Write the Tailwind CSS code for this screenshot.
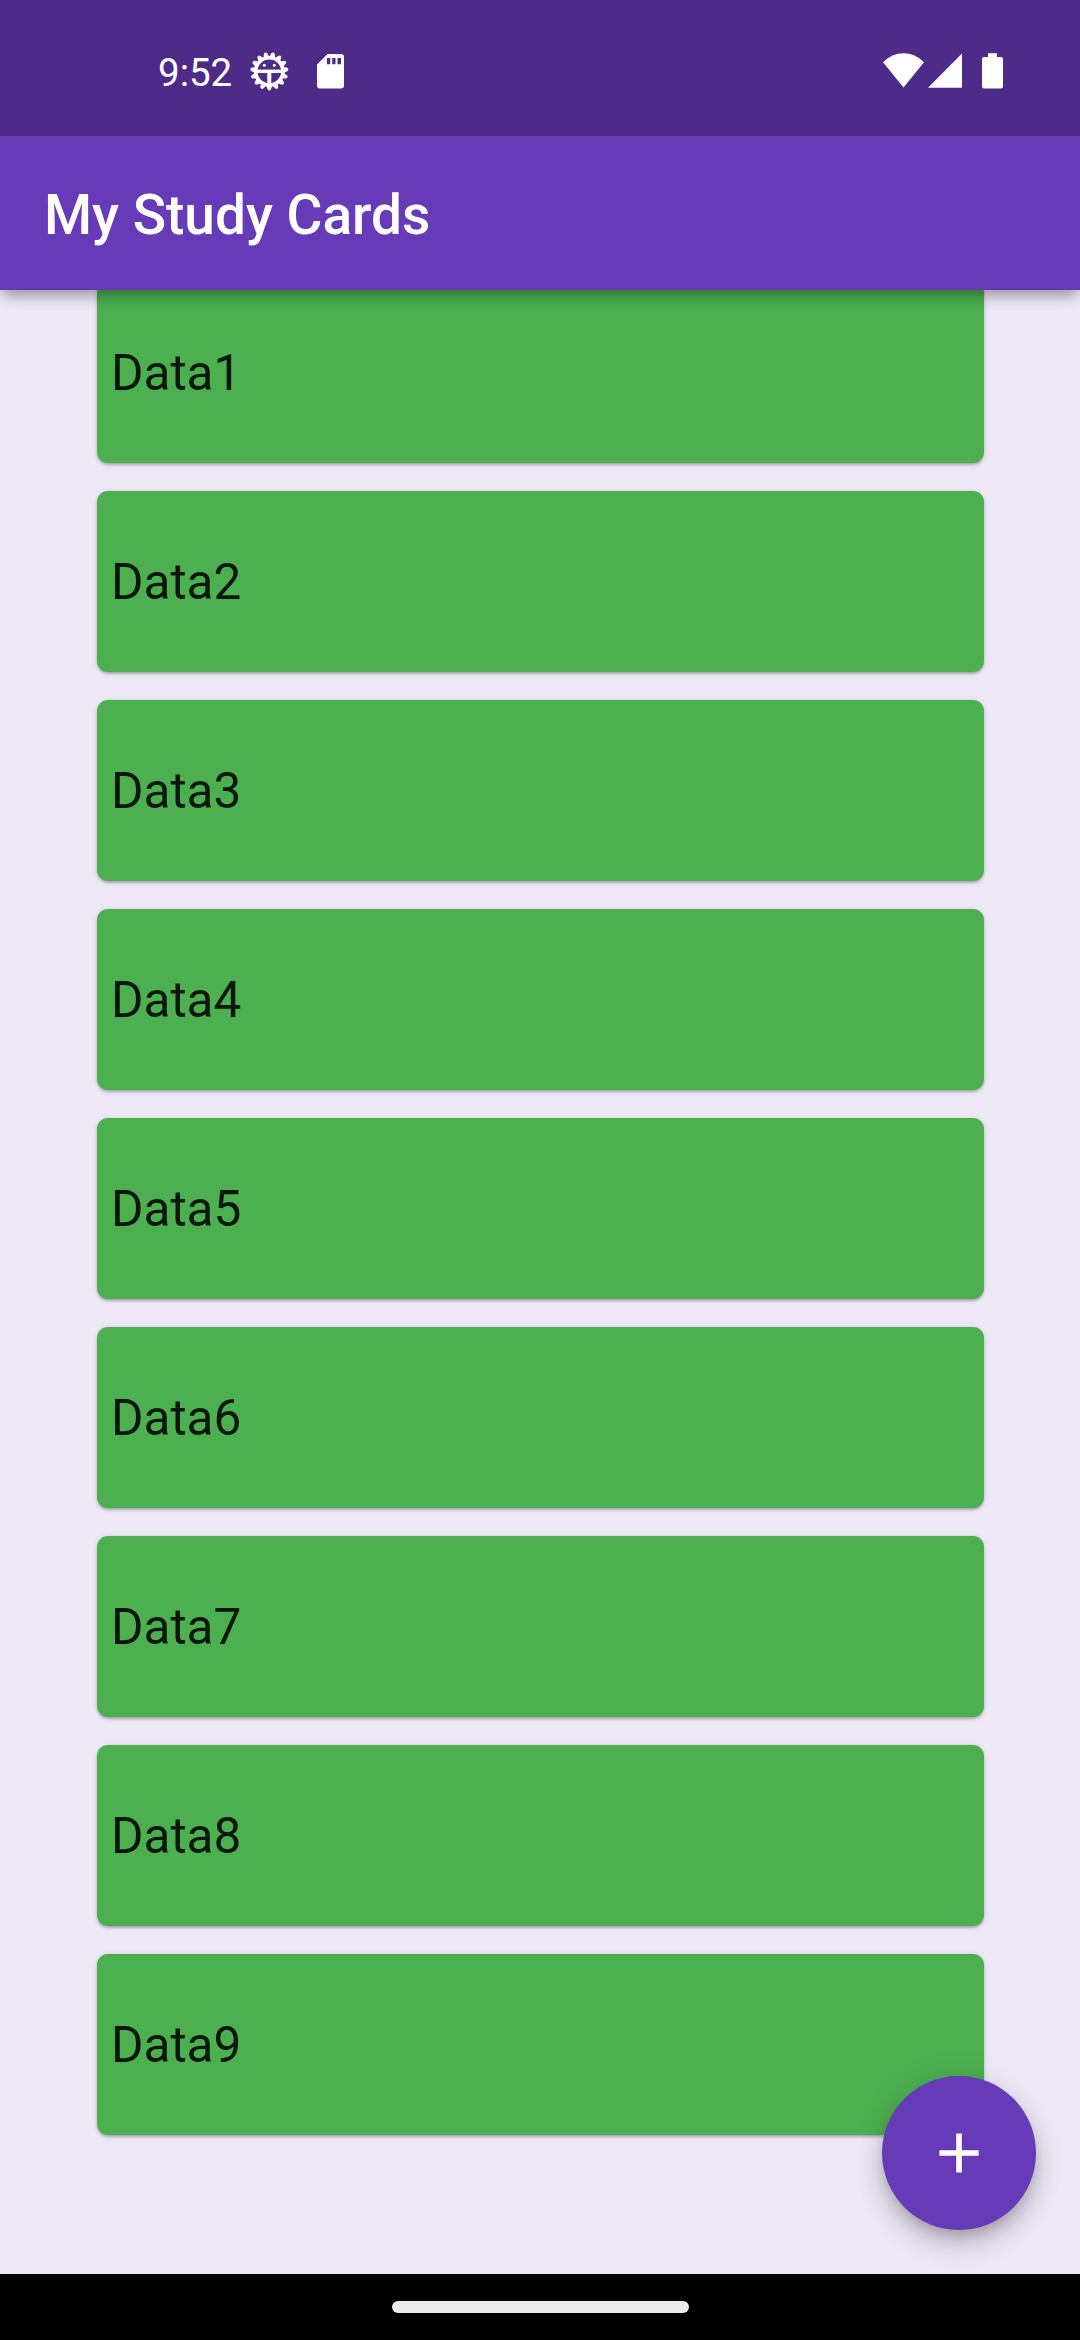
<!DOCTYPE html>
<html lang="en">
<head>
<meta charset="utf-8">
<title>My Study Cards</title>
<script src="https://cdn.jsdelivr.net/npm/@tailwindcss/browser@4"></script>
</head>
<body class="relative flex h-[2340px] w-[1080px] flex-col overflow-hidden bg-[#ede7f6] font-['Roboto',sans-serif]">
  <div class="relative flex h-[136px] z-20 shrink-0 items-start bg-[#4e2b88] pt-[48px] text-white">
    <span class="ml-[158px] mt-px w-[90px] text-[38.5px] leading-[48px] whitespace-nowrap">9:52</span>
    <svg class="ml-[1px] mt-[3px] size-[40px]" viewBox="-20.300 -20.300 40 40" fill="none">
      <circle r="13.600" stroke="#fff" stroke-width="3.600"/>
      <g id="teeth" fill="#fff"></g>
      <path d="M-13 0H13" stroke="#fff" stroke-width="3.400"/>
      <path d="M0 0V13" stroke="#fff" stroke-width="4"/>
      <circle cx="-5" cy="-6" r="1.500" fill="#fff"/>
      <circle cx="5" cy="-6" r="1.500" fill="#fff"/>
    </svg>
    <svg class="mt-[6px] ml-[28px] h-[35px] w-[27px]" viewBox="0 0 27 35">
      <path fill="#fff" fill-rule="evenodd" d="M10.500 0H24Q27 0 27 3V31.500Q27 34.500 24 34.500H3Q0 34.500 0 31.500V10.500ZM10 4V10.300H13.300V4ZM15.200 4V10.300H18.500V4ZM20.500 4V10.300H24V4Z"/>
    </svg>
    <svg class="mt-[5px] ml-[539px] h-[36px] w-[121px]" viewBox="0 0 121 36" fill="#fff">
      <path d="M0 9.200Q9 0.300 20.500 0.300T41 9.200L20.500 34.500Z"/>
      <path d="M45 34.700H79V0.600Z"/>
      <path d="M105 0.300H114V4H118Q120 4 120 6V33.500Q120 35.500 118 35.500H101Q99 35.500 99 33.500V6Q99 4 101 4H105Z"/>
    </svg>
  </div>
  <header class="relative z-10 flex h-[154px] shrink-0 items-center bg-[#673ab7] pt-[3px] pl-[44px] shadow-[0_6px_11px_-3px_rgba(0,0,0,0.2),0_11px_14px_-3px_rgba(0,0,0,0.14),0_3px_20px_-2px_rgba(0,0,0,0.1)]">
    <h1 class="text-[55px] leading-[64px] font-medium whitespace-nowrap text-white">My Study Cards</h1>
  </header>
  <main class="flex h-[1984px] shrink-0 flex-col justify-end gap-[28px] overflow-hidden pr-[96px] pb-[139px] pl-[97px]" id="cards"></main>
  <button aria-label="Add card" class="absolute top-[2076px] left-[882px] flex size-[154px] items-center justify-center rounded-full bg-[#673ab7] shadow-[0_8px_14px_-3px_rgba(0,0,0,0.2),0_16px_28px_0_rgba(0,0,0,0.14),0_3px_36px_0_rgba(0,0,0,0.08)]">
    <svg class="size-[40px]" viewBox="0 0 40 40" stroke="#fff" stroke-width="5.600"><path d="M20 .4V39.600M.4 20H39.600"/></svg>
  </button>
  <nav class="relative flex h-[66px] shrink-0 justify-center bg-black pt-[27px]">
    <div class="h-[12px] w-[297px] rounded-full bg-[#ebebeb]"></div>
  </nav>
  <script>
    const teeth = document.getElementById('teeth');
    for (let i = 0; i < 15; i++) {
      const p = document.createElementNS('http://www.w3.org/2000/svg', 'path');
      p.setAttribute('d', 'M-2.900 14.500L-1.600 18.200Q0 20 1.600 18.200L2.900 14.500Z');
      p.setAttribute('transform', `rotate(${i * 24})`);
      teeth.append(p);
    }
    document.getElementById('cards').innerHTML = Array.from({ length: 9 }, (_, i) =>
      `<article class="flex h-[181px] shrink-0 items-center rounded-[11px] bg-[#4caf50] pl-[14px] shadow-[0_3px_3px_-1px_rgba(0,0,0,0.17),0_1px_3px_0_rgba(0,0,0,0.14),0_1px_6px_0_rgba(0,0,0,0.08)]"><span class="text-[49.5px] leading-[58px] text-black/87">Data${i + 1}</span></article>`).join('');
  </script>
</body>
</html>
